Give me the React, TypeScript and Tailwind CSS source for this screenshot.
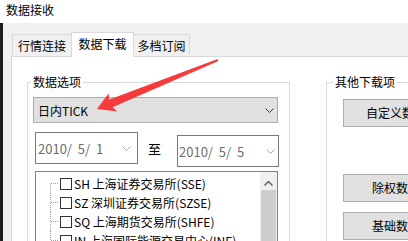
import React from 'react';

const trees = [
  'SH 上海证券交易所(SSE)',
  'SZ 深圳证券交易所(SZSE)',
  'SQ 上海期货交易所(SHFE)',
  'IN 上海国际能源交易中心(INE)',
];

function ChevronDown({ color = '#333333' }: { color?: string }) {
  return (
    <svg width="9" height="5" viewBox="0 0 9 5" className="shrink-0">
      <polyline points="0.5,0.5 4.5,4.5 8.5,0.5" fill="none" stroke={color} strokeWidth="1" />
    </svg>
  );
}

function TreeRow({ label, first }: { label: string; first: boolean }) {
  return (
    <div className="flex items-center h-[19px] shrink-0">
      <svg width="24" height="19" viewBox="0 0 24 19" className="shrink-0">
        <line x1="14.5" y1={first ? 9.5 : 0} x2="14.5" y2="19" stroke="#a0a0a0" strokeDasharray="1 1" />
        <line x1="15" y1="9.5" x2="23" y2="9.5" stroke="#a0a0a0" strokeDasharray="1 1" />
      </svg>
      <div className="w-[12px] h-[12px] border border-[#333333] bg-white shrink-0" />
      <span className="ml-[2px] text-[12px] leading-[13px] whitespace-nowrap">{label}</span>
    </div>
  );
}

function Arrow() {
  return (
    <svg className="absolute inset-0 pointer-events-none" width="408" height="241" viewBox="0 0 408 241">
      <polygon
        points="97,109 117.5,111.5 112.6,107.2 218.4,60.9 217.6,59.1 109.4,99.5 108.5,93.5"
        fill="#f53b3b"
      />
    </svg>
  );
}

export default function App() {
  return (
    <div className="relative w-[408px] h-[241px] overflow-hidden bg-[#f0f0f0] text-black font-['Noto_Sans_CJK_SC','Noto_Sans',sans-serif] text-[12px] leading-[12px]">
      <div className="h-[23px] bg-white pl-[6px] pt-[4px]">数据接收</div>

      <div className="flex h-[218px]">
        <div className="w-[3px] bg-[#1c1c1c] shrink-0" />

        <div className="flex-1 flex flex-col pl-[8px] pt-[9px]">
          {/* tabs */}
          <div className="flex items-start h-[24px] shrink-0">
            <div className="ml-[1px] mt-[2px] w-[59px] h-[22px] border-l border-t border-[#d9d9d9] flex items-center justify-center">
              行情连接
            </div>
            <div className="relative z-10 w-[63px] h-[25px] border-l border-t border-r border-[#d9d9d9] bg-white flex items-center justify-center pb-[2px]">
              数据下载
            </div>
            <div className="mt-[2px] w-[56px] h-[22px] border-t border-r border-[#d9d9d9] flex items-center justify-center">
              多档订阅
            </div>
          </div>

          {/* panel */}
          <div className="flex-1 flex bg-white border-l border-t border-[#d9d9d9] pl-[15px] pt-[19px]">
            <fieldset className="w-[263px] h-[200px] shrink-0 border border-[#dcdcdc]">
              <legend className="ml-[3px] px-[2px] leading-[12px]">数据选项</legend>

              <div className="ml-[5px] mt-[9px] w-[245px] h-[26px] border border-[#adadad] bg-[#e1e1e1] flex items-center justify-between pl-[4px] pr-[3px]">
                <span className="text-[12px] leading-[13px]">日内TICK</span>
                <ChevronDown />
              </div>

              <div className="ml-[7px] mt-[9px] h-[35px] flex items-start">
                <div className="w-[103px] h-[32px] border border-[#7a7a7a] bg-white flex items-center justify-between pl-[2px] pr-[6px]">
                  <span className="text-[13px] leading-[13px] text-[#6d6d6d] whitespace-pre">2010/  5/  1</span>
                  <ChevronDown color="#a8a8a8" />
                </div>
                <div className="w-[39px] h-[32px] flex items-center pl-[10px] text-[13px] leading-[13px]">至</div>
                <div className="mt-[3px] w-[102px] h-[32px] border border-[#7a7a7a] bg-white flex items-center justify-between pl-[1px] pr-[3px]">
                  <span className="text-[13px] leading-[13px] text-[#6d6d6d] whitespace-pre">2010/  5/  5</span>
                  <ChevronDown color="#a8a8a8" />
                </div>
              </div>

              <div className="ml-[7px] mt-[4px] w-[243px] h-[100px] border border-[#828282] bg-white flex">
                <div className="flex-1 flex flex-col pt-[2px] overflow-hidden">
                  {trees.map((t, i) => (
                    <TreeRow key={t} label={t} first={i === 0} />
                  ))}
                </div>
                <div className="w-[17px] bg-[#f0f0f0] flex flex-col shrink-0">
                  <div className="h-[18px] flex justify-center pt-[9px]">
                    <svg width="9" height="5" viewBox="0 0 9 5">
                      <polyline points="0.5,4.5 4.5,0.5 8.5,4.5" fill="none" stroke="#606060" strokeWidth="1.5" />
                    </svg>
                  </div>
                  <div className="flex-1 mx-[1px] bg-[#cdcdcd]" />
                </div>
              </div>
            </fieldset>

            <fieldset className="ml-[36px] w-[200px] h-[200px] shrink-0 border border-[#dcdcdc]">
              <legend className="ml-[6px] px-[2px] leading-[12px]">其他下载项</legend>
              <div className="ml-[16px] mt-[11px] w-[130px] h-[28px] border border-[#adadad] bg-[#e1e1e1] flex items-center justify-center whitespace-nowrap">
                自定义数据下载
              </div>
              <div className="ml-[16px] mt-[47px] w-[130px] h-[28px] border border-[#adadad] bg-[#e1e1e1] flex items-center justify-center whitespace-nowrap">
                除权数据下载
              </div>
              <div className="ml-[16px] mt-[10px] w-[130px] h-[28px] border border-[#adadad] bg-[#e1e1e1] flex items-center justify-center whitespace-nowrap">
                基础数据下载
              </div>
            </fieldset>
          </div>
        </div>
      </div>

      <Arrow />
    </div>
  );
}
